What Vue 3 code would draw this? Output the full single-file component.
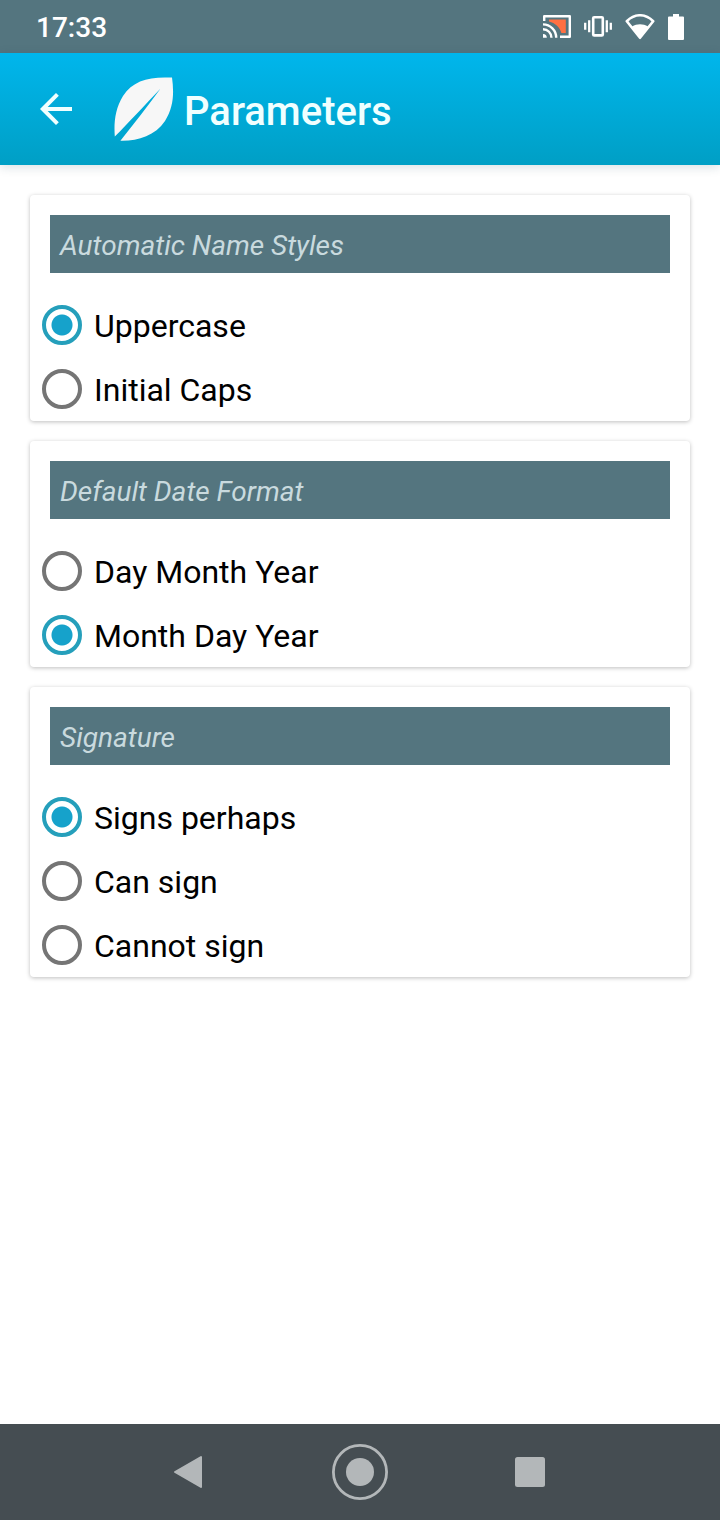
<script setup>
import { reactive } from 'vue'

const groups = reactive([
  { id: 'name', title: 'Automatic Name Styles', options: ['Uppercase', 'Initial Caps'], value: 'Uppercase' },
  { id: 'date', title: 'Default Date Format', options: ['Day Month Year', 'Month Day Year'], value: 'Month Day Year' },
  { id: 'signature', title: 'Signature', options: ['Signs perhaps', 'Can sign', 'Cannot sign'], value: 'Signs perhaps' },
])
</script>

<template>
  <div class="screen">
    <div class="status">
      <time class="clock">17:33</time>
      <div class="indicators">
        <svg width="28" height="24" viewBox="0 0 28 24" aria-hidden="true">
          <path d="M6 4.6H22.8V18H18.4C16.6 12 12 8.2 6 6.6Z" fill="#ff7043" />
          <path d="M1.2 6V1.2H26.8V21.8H17" fill="none" stroke="#fff" stroke-width="2.4" stroke-linejoin="round" />
          <path d="M0 9.4A13.2 13.2 0 0 1 13.2 22.8M0 14.2A8.4 8.4 0 0 1 8.4 22.8" fill="none" stroke="#fff" stroke-width="2.4" />
          <path d="M0 19A3.8 3.8 0 0 1 3.8 22.8H0Z" fill="#fff" />
        </svg>
        <svg width="28" height="24" viewBox="0 0 28 24" aria-hidden="true">
          <rect x="9.2" y="2.2" width="9.6" height="18.2" rx="1" fill="none" stroke="#fff" stroke-width="2.6" />
          <path d="M1.2 7.8V14.8M5.2 5.3V17.3M22.8 5.3V17.3M26.8 7.8V14.8" stroke="#fff" stroke-width="2.3" />
        </svg>
        <svg width="30" height="26" viewBox="0 0 30 26" aria-hidden="true">
          <path d="M1.8 7.2C9.8-.7 20.2-.7 28.2 7.2L15 23.8Z" fill="none" stroke="#fff" stroke-width="2.6" stroke-linejoin="round" />
          <path d="M7 12.6C12 9.4 18 9.4 23 12.6L15 24Z" fill="#fff" />
        </svg>
        <svg width="16" height="26" viewBox="0 0 16 26" aria-hidden="true">
          <path d="M5 0H11V2.5H15Q16 2.5 16 3.5V25Q16 26 15 26H1Q0 26 0 25V3.5Q0 2.5 1 2.5H5Z" fill="#fff" />
        </svg>
      </div>
    </div>

    <header class="toolbar">
      <button class="back" type="button" aria-label="Back">
        <svg width="32" height="32" viewBox="0 0 32 32" aria-hidden="true">
          <path d="M32 16H3M17.4 1.4L2.8 16L17.4 30.6" fill="none" stroke="#f0ffff" stroke-width="4" />
        </svg>
      </button>
      <svg class="leaf" width="60" height="64" viewBox="0 0 60 64" aria-hidden="true">
        <path d="M58 .6C35-.6 19 3.5 9 19C1 32-.2 46 .8 59.6C14 46 31 28 46.6 11.4C34 28.6 20 46.5 6.4 63.8C23 64.3 41 59 51 44C60 30 60 15 58 .6Z" fill="#f7f7f7" />
      </svg>
      <h1>Parameters</h1>
    </header>

    <main>
      <section v-for="g in groups" :key="g.id" class="card" role="radiogroup" :aria-labelledby="g.id + '-title'">
        <h2 :id="g.id + '-title'">{{ g.title }}</h2>
        <div class="options">
          <label v-for="o in g.options" :key="o" class="option">
            <input v-model="g.value" type="radio" :name="g.id" :value="o" />
            <span>{{ o }}</span>
          </label>
        </div>
      </section>
    </main>

    <nav class="system">
      <button type="button" aria-label="Back">
        <svg width="56" height="56" viewBox="0 0 56 56" aria-hidden="true">
          <path d="M13 28L39 13V43Z" fill="#b3b7b9" stroke="#b3b7b9" stroke-width="2" stroke-linejoin="round" />
        </svg>
      </button>
      <button type="button" aria-label="Home">
        <svg width="56" height="56" viewBox="0 0 56 56" aria-hidden="true">
          <circle cx="28" cy="28" r="26.6" fill="none" stroke="#b3b7b9" stroke-width="2.8" />
          <circle cx="28" cy="28" r="14" fill="#b3b7b9" />
        </svg>
      </button>
      <button type="button" aria-label="Recent apps">
        <svg width="56" height="56" viewBox="0 0 56 56" aria-hidden="true">
          <rect x="13" y="13" width="30" height="30" rx="2.5" fill="#b3b7b9" />
        </svg>
      </button>
    </nav>
  </div>
</template>

<style>
body {
  background: #fff;
}
</style>

<style scoped>
.screen {
  display: flex;
  flex-direction: column;
  min-height: 100vh;
  font-family: Roboto, "Liberation Sans", sans-serif;
  color: #000;
}
.status {
  display: flex;
  align-items: center;
  justify-content: space-between;
  height: 53px;
  padding: 0 36px;
  background: #54757f;
  color: #fff;
}
.clock {
  padding-top: 2px;
  font-size: 28px;
  line-height: 32px;
  font-weight: 500;
}
.indicators {
  display: flex;
  align-items: center;
  gap: 13px;
}
.toolbar {
  display: flex;
  align-items: center;
  height: 112px;
  padding: 0 24px;
  background: linear-gradient(#00b6ec, #009fc5);
  box-shadow: 0 2px 10px rgba(0, 60, 80, 0.16);
}
button {
  display: flex;
  align-items: center;
  justify-content: center;
  padding: 0;
  border: 0;
  background: none;
}
.back {
  width: 64px;
  height: 64px;
}
.leaf {
  margin-left: 26px;
}
h1 {
  margin: 0 0 0 10px;
  padding-top: 6px;
  font-size: 40px;
  line-height: 48px;
  font-weight: 500;
  color: #f0ffff;
}
main {
  display: flex;
  flex: 1;
  flex-direction: column;
  gap: 20px;
  padding: 30px;
}
.card {
  padding-top: 20px;
  border-radius: 4px;
  background: #fff;
  box-shadow: 0 1px 4px rgba(0, 0, 0, 0.26);
}
h2 {
  margin: 0 20px;
  padding: 15px 10px 11px;
  background: #54757f;
  color: #c9dade;
  font-size: 28px;
  line-height: 32px;
  font-weight: 400;
  font-style: italic;
}
.options {
  padding: 20px 12px 0;
}
.option {
  display: flex;
  align-items: center;
  gap: 12px;
  height: 64px;
  font-size: 32px;
  line-height: 40px;
}
.option span {
  padding-top: 2px;
}
input {
  appearance: none;
  box-sizing: border-box;
  width: 40px;
  height: 40px;
  margin: 0;
  border: 4px solid #757575;
  border-radius: 50%;
}
input:checked {
  border-color: #259fbb;
  background: radial-gradient(circle, #16a2cb 10px, transparent 11px);
}
.system {
  display: flex;
  justify-content: center;
  height: 96px;
  background: #454d52;
}
.system button {
  width: 170px;
}
</style>
